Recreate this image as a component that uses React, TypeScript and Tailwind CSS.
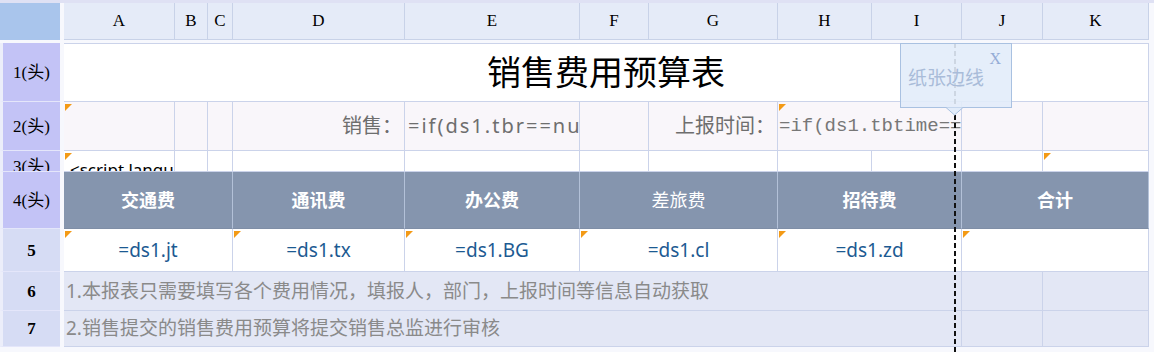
import React from 'react';

const sans = "font-['Noto_Sans','Noto_Sans_CJK_SC',sans-serif]";
const serif = "font-['Liberation_Serif','Noto_Sans_CJK_SC',serif]";
const mono = "font-['Liberation_Mono','Noto_Sans_CJK_SC',monospace]";

const letters = ['A', 'B', 'C', 'D', 'E', 'F', 'G', 'H', 'I', 'J', 'K'];

// orange corner flag shown on cells bound to an expression
const Mark = () => (
    <span className="absolute left-[1px] top-[2px] h-0 w-0 border-t-[7px] border-r-[7px] border-t-[#f39a16] border-r-transparent" />
);

type CellProps = {
    className?: string;
    mark?: boolean;
    children?: React.ReactNode;
};

const Cell = ({ className = '', mark, children }: CellProps) => (
    <div
        className={`relative flex items-center overflow-hidden whitespace-nowrap border-r border-b border-[#cbd3ea] ${className}`}
    >
        {mark && <Mark />}
        {children}
    </div>
);

const RowHead = ({ label, light, className = '' }: { label: string; light?: boolean; className?: string }) => (
    <div
        className={`flex overflow-hidden border-b border-l-[3px] border-b-[#e4e6fa] border-l-[#eceefa] text-[17px] leading-none text-black ${serif} ${
            light ? 'bg-[#d6dcf4]' : 'bg-[#c3c3f6]'
        } ${className}`}
    >
        {label}
    </div>
);

const fees = [
    { title: '交通费', expr: '=ds1.jt', span: 'col-span-3 col-start-3', bold: true },
    { title: '通讯费', expr: '=ds1.tx', span: '', bold: true },
    { title: '办公费', expr: '=ds1.BG', span: '', bold: true },
    { title: '差旅费', expr: '=ds1.cl', span: 'col-span-2', bold: false },
    { title: '招待费', expr: '=ds1.zd', span: 'col-span-2', bold: true },
    { title: '合计', expr: '', span: 'col-span-2', bold: true }
];

export default function App() {
    return (
        <div className={`relative h-[352px] w-[1154px] overflow-hidden bg-[#f7f8fd] ${sans}`}>
            <div className="h-[3px] bg-[#dfe1f4]" />
            <div className="grid grid-cols-[60px_4px_111px_33px_25px_172px_175px_69px_129px_94px_90px_81px_106px] grid-rows-[37px_3px_59px_49px_21px_57px_43px_39px_36px]">
                {/* column headers */}
                <div className="bg-[#a9c5ec]" />
                {letters.map((l, i) => (
                    <div
                        key={l}
                        className={`flex items-center justify-center border-r border-b border-[#c8d2e8] bg-[#e5ebf8] text-[17px] text-black ${serif} ${
                            i === 0 ? 'col-start-3' : ''
                        }`}
                    >
                        {l}
                    </div>
                ))}
                <div className="col-span-13" />

                {/* row 1: title */}
                <RowHead label="1(头)" className="items-center justify-center" />
                <Cell className="col-span-11 col-start-3 justify-center border-t bg-white">
                    <span className="text-[34px] text-black">销售费用预算表</span>
                </Cell>

                {/* row 2 */}
                <RowHead label="2(头)" className="items-center justify-center" />
                <Cell className="col-start-3 bg-[#f9f6fa]" mark />
                <Cell className="bg-[#f9f6fa]" />
                <Cell className="bg-[#f9f6fa]" />
                <Cell className="justify-end bg-[#f9f6fa] pr-[2px] text-[20px] text-[#6e6e6e]">销售：</Cell>
                <Cell className="bg-[#f9f6fa] pl-[3px] text-[20px] tracking-[2px] text-[#6e6e6e]">=if(ds1.tbr==null,&quot;&quot;,ds1.tbr)</Cell>
                <Cell className="bg-[#f9f6fa]" />
                <Cell className="justify-end bg-[#f9f6fa] pr-[2px] text-[20px] text-[#6e6e6e]">上报时间：</Cell>
                <Cell className={`col-span-2 bg-[#f9f6fa] pl-[1px] text-[19px] text-[#777777] ${mono}`} mark>
                    =if(ds1.tbtime==null,now(),ds1.tbtime)
                </Cell>
                <Cell className="bg-[#f9f6fa]" />
                <Cell className="bg-[#f9f6fa]" />

                {/* row 3 */}
                <RowHead label="3(头)" className="justify-center pt-[7px]" />
                <Cell className="col-start-3 items-start bg-white pl-[6px] pt-[10px] text-[17px] leading-[17px] text-black" mark>
                    &lt;script language=&quot;javascript&quot;&gt;
                </Cell>
                {letters.slice(1, 10).map((l) => (
                    <Cell key={l} className="bg-white" />
                ))}
                <Cell className="bg-white" mark />

                {/* row 4: fee titles */}
                <RowHead label="4(头)" className="items-center justify-center" />
                {fees.map((f) => (
                    <div
                        key={f.title}
                        className={`flex items-center justify-center border-r border-b border-r-[#b3c1d8] border-b-[#7f8ea6] bg-[#8595ae] text-[18px] text-white ${
                            f.bold ? 'font-bold' : ''
                        } ${f.span}`}
                    >
                        {f.title}
                    </div>
                ))}

                {/* row 5: expressions */}
                <RowHead label="5" light className="items-center justify-center font-bold" />
                {fees.map((f) => (
                    <Cell key={f.title} className={`justify-center bg-white text-[19px] text-[#1c5a92] ${f.span}`} mark>
                        {f.expr}
                    </Cell>
                ))}

                {/* rows 6-7: notes */}
                <RowHead label="6" light className="items-center justify-center font-bold" />
                <Cell className="col-span-9 col-start-3 bg-[#e3e7f5] pl-[2px] text-[19px] text-[#8a8a8a]">
                    1.本报表只需要填写各个费用情况，填报人，部门，上报时间等信息自动获取
                </Cell>
                <Cell className="bg-[#e3e7f5]" />
                <Cell className="bg-[#e3e7f5]" />

                <RowHead label="7" light className="items-center justify-center font-bold" />
                <Cell className="col-span-9 col-start-3 bg-[#e3e7f5] pl-[2px] text-[19px] text-[#8a8a8a]">
                    2.销售提交的销售费用预算将提交销售总监进行审核
                </Cell>
                <Cell className="bg-[#e3e7f5]" />
                <Cell className="bg-[#e3e7f5]" />
            </div>

            {/* paper edge line */}
            <div className="absolute left-[954px] top-[43px] h-[309px] w-[2px] bg-[repeating-linear-gradient(to_bottom,#111_0_5px,transparent_5px_8px)]" />

            {/* paper edge tooltip */}
            <div className="absolute left-[900px] top-[43px] h-[65px] w-[112px] border border-[#a9c1e1] bg-[#e2ecfa]/90">
                <span className={`absolute right-[10px] top-[3px] text-[16px] text-[#94acd6] ${serif}`}>X</span>
                <span className="absolute left-[7px] top-[20px] text-[19px] text-[#a9bcd9]">纸张边线</span>
            </div>
            <svg className="absolute left-[946px] top-[107px]" width="17" height="9" viewBox="0 0 17 9">
                <path d="M0 0.5 L8.5 8 L17 0.5" fill="#e2ecfa" stroke="#a9c1e1" strokeWidth="1" />
            </svg>
        </div>
    );
}
